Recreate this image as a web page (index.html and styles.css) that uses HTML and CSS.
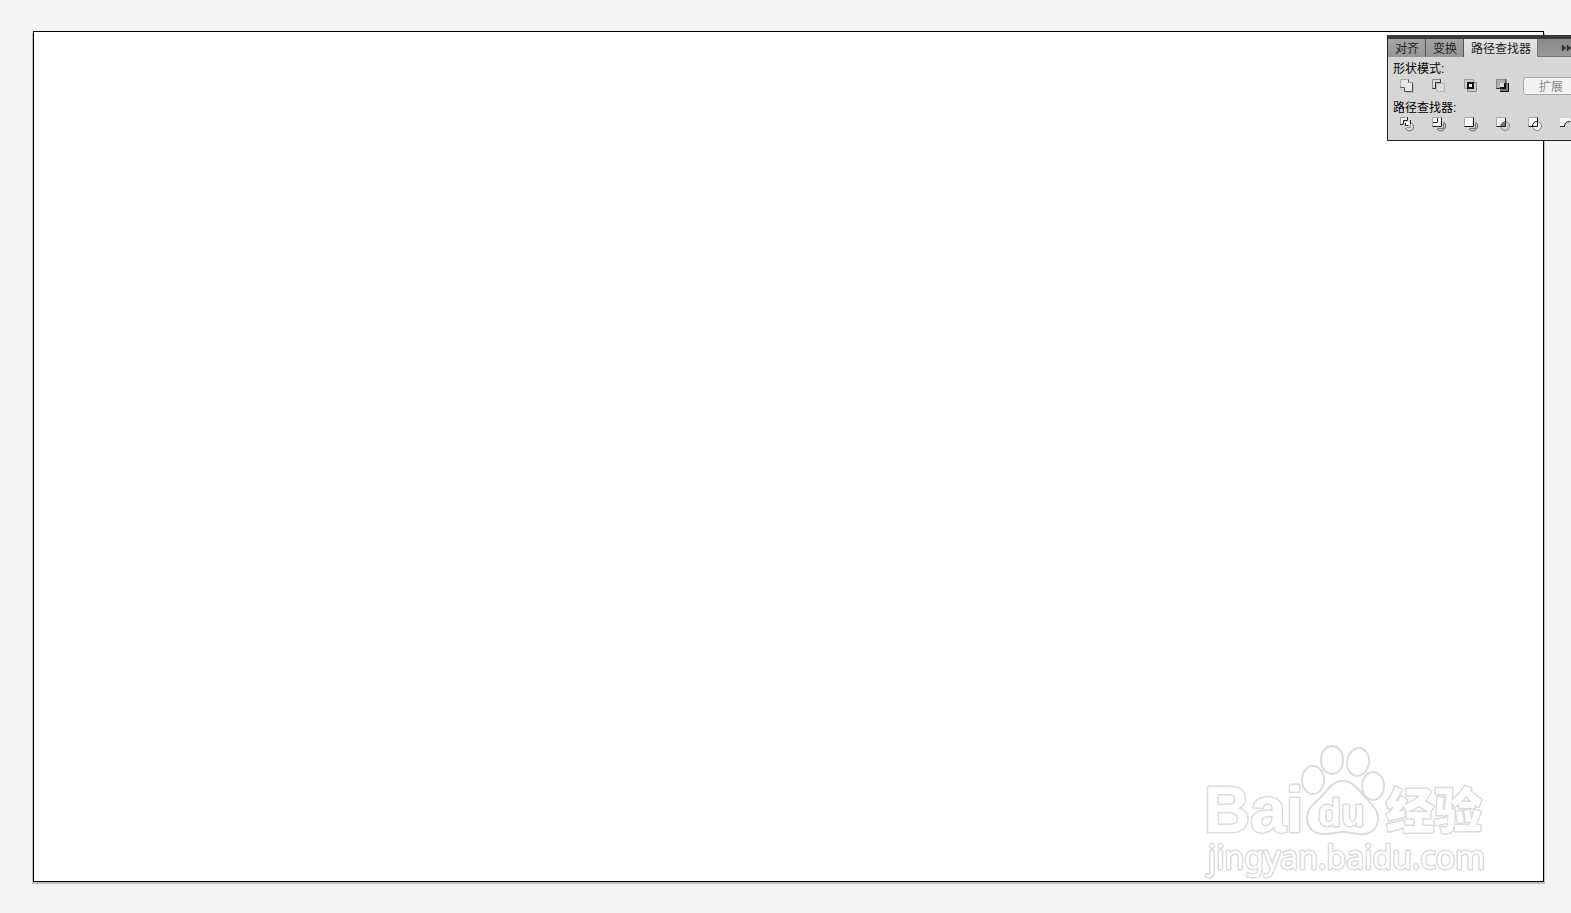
FILE: index.html
```html
<!DOCTYPE html>
<html lang="zh-CN">
<head>
<meta charset="utf-8">
<title>路径查找器</title>
<link rel="stylesheet" href="styles.css">
</head>
<body>
<main class="workspace">
  <section class="artboard">
    <svg class="watermark" viewBox="0 0 320 150" role="img" aria-label="Baidu 经验">
      <g class="mark">
        <text class="brand" x="14" y="102">Bai</text>
        <ellipse cx="123" cy="50" rx="11" ry="14"/>
        <ellipse cx="142" cy="30" rx="11" ry="14"/>
        <ellipse cx="168" cy="32" rx="11" ry="14" transform="rotate(10 168 32)"/>
        <ellipse cx="183" cy="56" rx="11" ry="14"/>
        <path d="M152 51C142 51 138 60 132 66C125 73 117 78 117 88C117 98 124 104 134 104C142 104 146 102 153 102C160 102 165 105 174 104C183 103 188 97 188 88C188 79 180 73 174 66C168 59 163 51 152 51Z"/>
        <text class="du" x="128" y="96">du</text>
        <text class="cn" x="196" y="98">经验</text>
        <text class="url" x="18" y="139">jingyan.baidu.com</text>
      </g>
    </svg>
  </section>
  <aside class="panel">
    <div class="panel-body">
      <div class="tabs">
        <button class="tab" type="button">对齐</button>
        <button class="tab" type="button">变换</button>
        <button class="tab active" type="button">路径查找器</button>
        <button class="collapse" type="button" aria-label="折叠"><svg viewBox="0 0 12 8"><path d="M1 1L5 4L1 7ZM6 1L10 4L6 7Z" fill="#333" stroke="#333" stroke-width=".5"/></svg></button>
      </div>
      <div class="group">
        <h2 class="label">形状模式:</h2>
        <div class="tools">
          <button class="tool" type="button" aria-label="联集"><svg viewBox="0 1 18 18"><path d="M5 14.500V12.500M9 16.500H17.500V8" fill="none" stroke="#bbb"/><path d="M4.500 3.500H12.500V6.500H16.500V15.500H8.500V11.500H4.500Z" fill="#e8e8e8" stroke="#aaa"/><path d="M12.500 3.500V6.500M16.500 6.500V15.500H8.500V11.500H4.500" fill="none" stroke="#555"/></svg></button>
          <button class="tool" type="button" aria-label="减去顶层"><svg viewBox="0 1 18 18"><path d="M8.500 7.500H16.500V15.500H8.500Z" fill="#dedede" stroke="#b4b4b4"/><path d="M4.500 3.500H12.500V6.500H7.500V12.500H4.500Z" fill="#ddd" stroke="#888"/><path d="M12.500 3.500V6.500H7.500V12.500H4.500" fill="none" stroke="#333"/></svg></button>
          <button class="tool" type="button" aria-label="交集"><svg viewBox="0 1 18 18"><path d="M7.500 6.500H16.500V15.500H7.500Z" fill="#ccc" stroke="#888"/><path d="M4.500 3.500H13.500V12.500H4.500Z" fill="#ccc" stroke="#999"/><path d="M8 7H13V12H8Z" fill="#eee" stroke="#111" stroke-width="2"/></svg></button>
          <button class="tool" type="button" aria-label="差集"><svg viewBox="0 1 18 18"><path d="M8 7H17V16H8Z" fill="#777"/><path d="M4.500 3.500H13.500V12.500H4.500Z" fill="#b0b0b0" stroke="#888"/><path d="M16.500 7V15.500H8" fill="none" stroke="#111"/><path d="M14 3V8M4 12.500H9" fill="none" stroke="#333"/><path d="M8 7H13V12H8Z" fill="#d8d8d8"/><path d="M13 7V12H8" fill="none" stroke="#111" stroke-width="2"/></svg></button>
          <button class="expand" type="button" disabled>扩展</button>
        </div>
      </div>
      <div class="group">
        <h2 class="label">路径查找器:</h2>
        <div class="tools">
          <button class="tool" type="button" aria-label="分割"><svg viewBox="-1 1 18 18"><path d="M3 3H10V6H6V10H3Z" fill="#eee"/><path d="M3.500 9V2.500H8" fill="none" stroke="#999"/><path d="M10.500 2V5.500H6.500V9.500H3M13.500 5V10.500H8.500V8" fill="none" stroke="#222"/><path d="M9 7H12V10H9Z" fill="#fff"/><path d="M14.500 8A4.200 4.200 0 1 1 8.500 13" fill="#ddd" stroke="#666"/><path d="M13.500 9V12.500H9.500" fill="none" stroke="#999"/></svg></button>
          <button class="tool" type="button" aria-label="修边"><svg viewBox="-1 1 18 18"><path d="M15 7.500A4.800 4.800 0 1 1 8 14" fill="#ccc" stroke="#666"/><path d="M3.500 2.500H12.500V11.500H3.500Z" fill="#fff" stroke="#aaa"/><path d="M12.500 2.500V11.500H3.500M8.500 3V7.500H4" fill="none" stroke="#222"/><path d="M14.500 7.500V13.500H8.500" fill="none" stroke="#777"/></svg></button>
          <button class="tool" type="button" aria-label="合并"><svg viewBox="-1 1 18 18"><path d="M15 7.500A4.800 4.800 0 1 1 8 14" fill="#ccc" stroke="#666"/><path d="M3.500 2.500H12.500V11.500H3.500Z" fill="#fff" stroke="#aaa"/><path d="M12.500 2.500V11.500H3.500" fill="none" stroke="#111"/><path d="M14.500 7.500V13.500H8.500" fill="none" stroke="#777"/></svg></button>
          <button class="tool" type="button" aria-label="裁剪"><svg viewBox="-1 1 18 18"><circle cx="12" cy="11" r="4.500" fill="#ccc" stroke="#888"/><path d="M3.500 2.500H12.500V11.500H3.500Z" fill="#eee" stroke="#aaa"/><path d="M12 6V11H7Q8 7 12 6Z" fill="#777"/><path d="M12.500 3V11.500H3.500" fill="none" stroke="#222"/></svg></button>
          <button class="tool" type="button" aria-label="轮廓"><svg viewBox="-1 1 18 18"><circle cx="12" cy="11" r="4.500" fill="#fff" stroke="#777"/><path d="M3.500 2.500H12.500V11.500H3.500Z" fill="#fff" stroke="#aaa"/><path d="M12.500 2.500V11.500H3.500M7.500 12Q7.500 6.500 12 6.500" fill="none" stroke="#111"/></svg></button>
          <button class="tool" type="button" aria-label="减去后方对象"><svg viewBox="-1 1 18 18"><path d="M3 3H13V6Q8 6 7 12H3Z" fill="#f6f6f6"/><path d="M3 11.500H7.500Q7.500 6.500 13 6.500" fill="none" stroke="#222"/></svg></button>
        </div>
      </div>
    </div>
  </aside>
</main>
</body>
</html>
```
FILE: styles.css
```css
* {
  box-sizing: border-box;
}

body {
  margin: 0;
  background: #f4f4f4;
  color: #000;
  font: 12px/16px "Liberation Sans", "Noto Sans CJK SC", sans-serif;
}

button {
  margin: 0;
  padding: 0;
  border: 0;
  background: none;
  color: inherit;
  font: inherit;
}

svg {
  display: block;
}

.workspace {
  position: relative;
  display: flex;
  min-height: 100vh;
  padding: 31px 27px 31px 33px;
  overflow: hidden;
}

.artboard {
  position: relative;
  flex: 1;
  border: 1px solid #000;
  background: #fff;
  box-shadow: 1px 2px 0 #bebebe, -1px 2px 0 #bebebe;
}

.watermark {
  position: absolute;
  right: 33px;
  bottom: 1px;
  width: 320px;
  height: 150px;
}

.mark {
  fill: #fff;
  stroke: #dcdcdc;
  stroke-width: 2px;
  stroke-linejoin: round;
  filter: blur(0.5px);
}

.mark text {
  stroke-width: 3px;
  paint-order: stroke;
}

.brand,
.du {
  font: bold 64px "Liberation Sans", sans-serif;
}

.du {
  font-size: 38px;
}

.cn {
  font: 900 48px "Noto Sans CJK SC", sans-serif;
}

.url {
  font: 32px "Noto Sans", sans-serif;
}

.panel {
  position: absolute;
  top: 35px;
  right: 0;
  width: 184px;
  overflow: hidden;
  border: 1px solid #222;
  border-top: 4px solid #3a3a3a;
  border-right: 0;
  background: #d6d6d6;
}

.panel-body {
  width: 210px;
  padding-bottom: 1px;
}

.tabs {
  display: flex;
  height: 18px;
  margin-bottom: 4px;
  border-bottom: 1px solid #777;
  background: linear-gradient(#8a8a8a, #999);
  color: #222;
}

.tab {
  height: 18px;
  padding: 1px 6px 0 7px;
  border-right: 1px solid #555;
  background: linear-gradient(#a4a4a4, #969696);
  white-space: nowrap;
}

.tab.active {
  border-right-color: #777;
  background: linear-gradient(#e4e4e4, #d6d6d6);
}

.collapse {
  margin-left: 23px;
}

.collapse svg {
  width: 12px;
  height: 8px;
}

.group {
  height: 39px;
}

.label {
  margin: 0;
  padding-left: 5px;
  font-size: 12px;
  font-weight: 400;
}

.tools {
  display: flex;
  align-items: flex-start;
  gap: 14px;
  padding-left: 8px;
}

.tool,
.tool svg {
  width: 18px;
  height: 18px;
}

.expand {
  width: 60px;
  height: 18px;
  margin-left: -1px;
  padding: 1px 4px 0 0;
  border: 1px solid #aaa;
  border-radius: 3px;
  background: #f2f2f2;
  color: #888;
}
```
